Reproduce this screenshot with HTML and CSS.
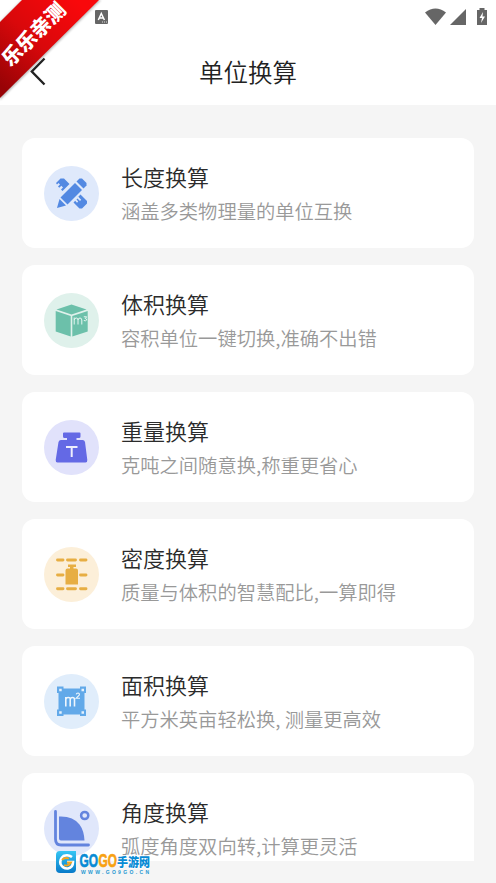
FILE: index.html
```html
<!DOCTYPE html>
<html lang="zh-CN">
<head>
<meta charset="utf-8">
<title>单位换算</title>
<link rel="stylesheet" href="styles.css">
</head>
<body>
<header class="header">
  <div class="status">
    <svg class="keyboard" width="13" height="14" viewBox="0 0 13 14"><rect width="13" height="14" rx="1" fill="#666"/><path d="M3.3 10 6.3 3.5 9.4 10M4.3 8H8.4" fill="none" stroke="#fff" stroke-width="1.5"/><path d="M7 12h5" stroke="#ddd" stroke-dasharray="1 1"/></svg>
    <svg class="signals" width="64" height="20" viewBox="0 0 64 20" fill="#666"><path d="M0 4.5Q10.5-3.5 21 4.5L10.5 17Z"/><path d="M41 1V17H25Z"/><path d="M54.500 0h5v2H62v15H52V2h2.500Z"/><path d="M58 4 54.500 10H57l-1 5 4-6.500H57.500Z" fill="#fff"/></svg>
  </div>
  <div class="nav">
    <svg class="back" width="17" height="30" viewBox="0 0 17 30"><path d="M14.500 1.500 1.800 14.500 14.500 27.500" fill="none" stroke="#222" stroke-width="2.400"/></svg>
    <h1>单位换算</h1>
  </div>
</header>
<main class="list">
  <section class="card">
    <svg class="icon" viewBox="8 10.500 55 55"><circle cx="35.500" cy="38" r="27.500" fill="#dfe9fb"/><g fill="#5389e2"><path d="M20 27.500 24.500 23H28L33.500 28.500 26.500 35.500 25 34 27 32 25.300 30.300 23.300 32.300 22 31 24 29 22.500 27.500 21 29Z"/><path d="M44.500 39 51 45.500V48L46 53H43.500L37.500 47 39.200 45.300 41 47.200 42.200 46 40.500 44 41.500 43 44 45.500 45.200 44.300 42.300 41.300Z"/><path d="M39 27.500 46 34.500 31.500 49 24.500 42Z"/><path d="M40.500 26 43.500 23H46L50.500 27.500V30L47.500 33Z"/><path d="M23.500 43.500 30 50 21 52.500Z"/></g></svg>
    <div class="text"><h2>长度换算</h2><p>涵盖多类物理量的单位互换</p></div>
  </section>
  <section class="card">
    <svg class="icon" viewBox="8 10.500 55 55"><circle cx="35.500" cy="38" r="27.500" fill="#dff1eb"/><g fill="#6cc0aa"><path d="M35.500 22 50.500 27 35.500 32 20.500 27Z"/><path d="M19.700 28.500 34.700 33.500V54L19.700 49Z"/><path d="M36.300 33.500 51.700 28.500V49L36.300 54Z"/></g><path d="M38.200 42V35M38.200 37.500Q38.500 35.500 40.300 35.500T42 37.500V42M42 37.500Q42.300 35.500 44 35.500T45.800 37.500V42M47.800 34.300H50.700L49.200 36Q51 36.200 50.700 37.500 50 38.800 47.800 38" fill="none" stroke="#e8f7f2"/></svg>
    <div class="text"><h2>体积换算</h2><p>容积单位一键切换,准确不出错</p></div>
  </section>
  <section class="card">
    <svg class="icon" viewBox="8 10.500 55 55"><circle cx="35.500" cy="38" r="27.500" fill="#e1e2fb"/><path d="M28 23H43.500Q44.500 23 44.500 24V27Q44.500 28.500 43 28.500H40.500V30.500H46.500Q48.500 30.500 49 32.500L51.300 50.500Q51.500 53 49.500 53H21.500Q19.500 53 19.700 50.500L22.500 32.500Q23 30.500 25 30.500H31V28.500H28.500Q27 28.500 27 27V24Q27 23 28 23Z" fill="#6469e5"/><path d="M30 37.500H41.500M35.700 37.500V47.500" fill="none" stroke="#eeeefd" stroke-width="2"/></svg>
    <div class="text"><h2>重量换算</h2><p>克吨之间随意换,称重更省心</p></div>
  </section>
  <section class="card">
    <svg class="icon" viewBox="8 10.500 55 55"><circle cx="35.500" cy="38" r="27.500" fill="#fcefd9"/><path d="M21.500 23.500h5.500M31.500 23.500h8M44.500 23.500h5.500M21.500 38.500h5.500M44.500 38.500h5.500M21.500 52.300h5.500M31.500 52.300h8M44.500 52.300h5.500" stroke="#e7ae43" stroke-width="2.900" stroke-linecap="round"/><path d="M32 28h8v2.500h-2.500v1.500H40q2 0 2 2V48H29.500V34q0-2 2-2H34v-1.500h-2Z" fill="#e7ae43"/></svg>
    <div class="text"><h2>密度换算</h2><p>质量与体积的智慧配比,一算即得</p></div>
  </section>
  <section class="card">
    <svg class="icon" viewBox="8 10.500 55 55"><circle cx="35.500" cy="38" r="27.500" fill="#e0edfb"/><path d="M21 23h6.500v2h16.500v-2H50v6.500h-1.500V46H50v6.500h-6v-1.500H27.500v1.500H21V46h1.500V29.500H21Z" fill="#62a9e9"/><path d="M23.200 25.200h2.500v2.500h-2.500ZM45.500 25.200H48v2.500h-2.500ZM23.200 47.700h2.500v2.500h-2.500ZM45.500 47.700H48v2.500h-2.500Z" fill="#e5f1fc"/><path d="M29.800 43V33.500M29.800 36Q30 34 32.300 34T34.200 36V43M34.200 36Q34.500 34 36.500 34T38.500 36V43" fill="none" stroke="#eef6fd" stroke-width="1.600"/><path d="M40.200 30.800Q40.500 29.500 42 29.500 44.300 30 43 32L40.200 34.700H44" fill="none" stroke="#eef6fd" stroke-width="1.100"/></svg>
    <div class="text"><h2>面积换算</h2><p>平方米英亩轻松换, 测量更高效</p></div>
  </section>
  <section class="card">
    <svg class="icon" viewBox="8 10.500 55 55"><circle cx="35.500" cy="38" r="27.500" fill="#e0e7fb"/><path d="M19.500 21V48.500Q19.500 54.500 25 54.500H52.500" fill="none" stroke="#6384de" stroke-width="2.800" stroke-linecap="round"/><path d="M23.500 26Q37 25.500 43.500 34 48 40 48.500 50H25Q23 50 23 48V26Z" fill="#6384de"/><circle cx="48.700" cy="25" r="3.600" fill="none" stroke="#6384de" stroke-width="2.500"/></svg>
    <div class="text"><h2>角度换算</h2><p>弧度角度双向转,计算更灵活</p></div>
  </section>
</main>
<div class="ribbon">
  <svg width="104" height="104" viewBox="0 0 104 104">
    <defs>
      <linearGradient id="red" gradientUnits="userSpaceOnUse" x1="75" y1="0" x2="0" y2="85"><stop offset="0" stop-color="#f9080b"/><stop offset=".5" stop-color="#d9080b"/><stop offset="1" stop-color="#980306"/></linearGradient>
      <filter id="soft"><feGaussianBlur stdDeviation="1"/></filter>
    </defs>
    <path d="M22 0H101L0 100V22Z" fill="#888" opacity=".6" filter="url(#soft)"/>
    <path d="M22 0H99L0 98V22Z" fill="url(#red)"/>
    <text class="ribbon-text" transform="translate(33.500 34) rotate(-45)" x="0" y="7.500" text-anchor="middle">乐乐亲测</text>
  </svg>
</div>
<div class="watermark">
  <svg width="98" height="26" viewBox="0 0 98 26">
    <defs><linearGradient id="sky" x1="0" y1="0" x2="0" y2="1"><stop offset="0" stop-color="#35c6f4"/><stop offset="1" stop-color="#087ac9"/></linearGradient></defs>
    <path d="M5 1H21V19Q21 23 17 23H5Q1 23 1 19V5Q1 1 5 1Z" fill="url(#sky)"/>
    <path d="M17 7Q13 4 8.500 6 4.500 9 5.500 14 8 19 13 18.500 18 17.500 18 12H12" fill="none" stroke="#fff" stroke-width="2.600"/>
    <path d="M7 10Q9 7 14 8.500M9 15Q13 17 16 12.500H12" fill="none" stroke="#f5a51c" stroke-width="1.800"/>
    <text class="brand blue" x="24.500" y="17" textLength="18.500" lengthAdjust="spacingAndGlyphs">GO</text>
    <text class="brand orange" x="43.500" y="17" textLength="18.500" lengthAdjust="spacingAndGlyphs">GO</text>
    <text class="brand-cn" x="62" y="16.500" textLength="33" lengthAdjust="spacingAndGlyphs">手游网</text>
    <text class="brand-url" x="26" y="23.500" textLength="68">WWW.GO9GO.CN</text>
  </svg>
</div>
</body>
</html>
```
FILE: styles.css
```css
* { box-sizing: border-box; }
body {
  position: relative;
  display: flex;
  flex-direction: column;
  height: 883px;
  margin: 0;
  padding-bottom: 22px;
  overflow: hidden;
  background: #f5f5f5;
  color: #2b2b2b;
  font-family: "Noto Sans CJK SC", sans-serif;
}
h1, h2, p { margin: 0; font-weight: 350; }
.header { flex: none; height: 105px; background: #fff; }
.status {
  display: flex;
  justify-content: space-between;
  height: 40px;
  padding: 8px 7px 0 95px;
}
.keyboard { margin-top: 2px; }
.nav {
  display: grid;
  grid-template-columns: 80px 1fr 80px;
  align-items: center;
  height: 64px;
}
.back { margin-left: 30px; }
h1 { font-size: 24.5px; line-height: 36px; text-align: center; color: #222; }
.list {
  display: flex;
  flex: 1;
  flex-direction: column;
  gap: 17px;
  min-height: 0;
  padding: 33px 22px 0;
  overflow: hidden;
}
.card {
  display: flex;
  flex: none;
  align-items: center;
  gap: 22px;
  height: 110px;
  padding: 0 22px;
  border-radius: 13px;
  background: #fff;
}
.icon { flex: none; width: 55px; height: 55px; }
.text { white-space: nowrap; }
h2 { font-size: 22px; line-height: 34px; }
p { padding-top: 2px; font-size: 19.3px; line-height: 33px; color: #999; }
.ribbon { position: absolute; top: 0; left: 0; }
.ribbon svg, .watermark svg { display: block; }
.ribbon-text {
  fill: #fff;
  font: 900 20px "Noto Sans CJK SC", sans-serif;
}
.watermark { position: absolute; top: 850px; left: 55px; }
.brand {
  font: 900 19px "Liberation Sans", sans-serif;
  paint-order: stroke;
  stroke-width: .7px;
}
.blue { fill: #078bd5; stroke: #078bd5; }
.orange { fill: #f8a110; stroke: #f8a110; }
.brand-cn {
  fill: #078bd5;
  font: 900 12.5px "Noto Sans CJK SC", sans-serif;
  paint-order: stroke;
  stroke: #fff;
  stroke-width: 1.5px;
}
.brand-url { fill: #2497d2; font: bold 5px "Liberation Sans", sans-serif; }
```
